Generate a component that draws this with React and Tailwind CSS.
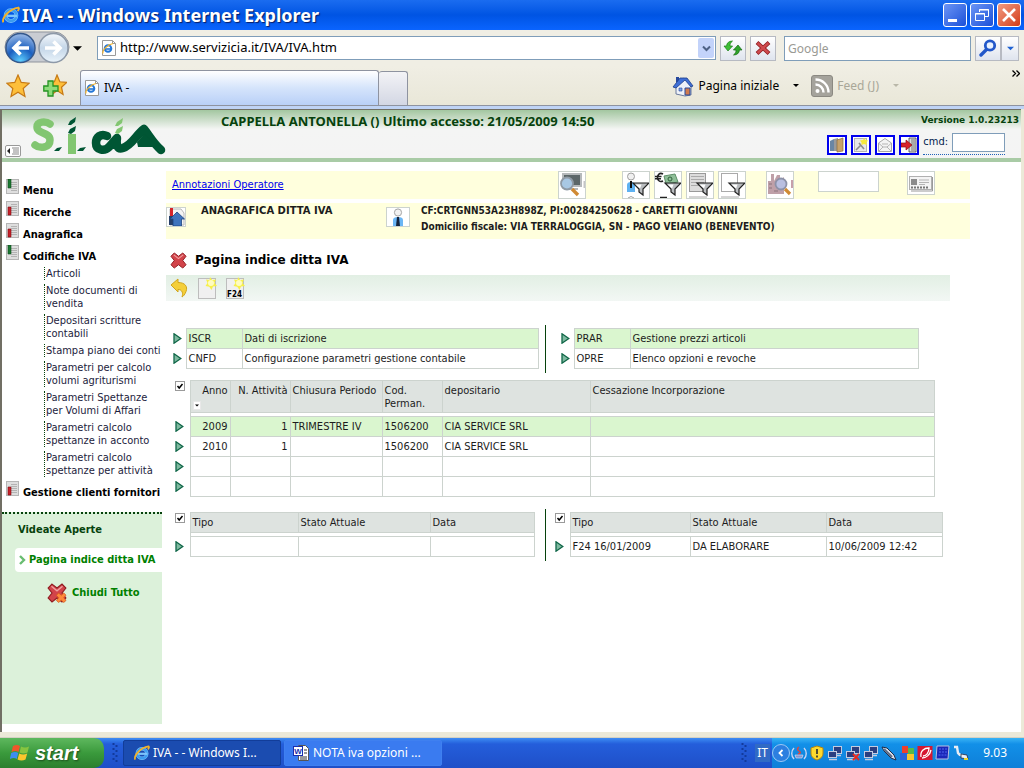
import React from "react";

const UI = "font-['DejaVu_Sans_Condensed','DejaVu_Sans',sans-serif]";

/* ---------- drawings ---------- */

function IeIcon({ size = 16 }) {
  return (
    <svg width={size} height={size} viewBox="0 0 16 16" fill="none" aria-hidden="true">
      <circle cx="8" cy="8.500" r="4.800" stroke="#7cc4fb" strokeWidth="3.400" />
      <circle cx="8" cy="8.500" r="4.800" stroke="#3c9cf0" strokeWidth="2.400" />
      <path d="M4 8.800h9.500" stroke="#7cc4fb" strokeWidth="2.200" />
      <path d="M1.200 14.600C-.4 11 6 2.600 14.600 1.400c1 1-.4 2.600-.8 3" stroke="#f3b229" strokeWidth="1.700" />
    </svg>
  );
}

function IePage({ size = 16 }) {
  return (
    <svg width={size} height={size} viewBox="0 0 16 16" fill="none" aria-hidden="true">
      <path d="M1.500.5h10l3 3v12h-13z" fill="#fff" stroke="#9a9a9a" />
      <path d="M11.500.5v3h3" stroke="#9a9a9a" />
      <circle cx="7" cy="8.500" r="3.300" stroke="#2477d8" strokeWidth="2" />
      <path d="M4 9h6.500" stroke="#2477d8" strokeWidth="1.600" />
      <path d="M2 13.500C1 11 6 4.500 12 3.500" stroke="#f3b229" strokeWidth="1.200" />
    </svg>
  );
}

function Star({ size = 24, plus = false }) {
  return (
    <svg width={size} height={size} viewBox="0 0 24 24" aria-hidden="true">
      <path
        d={plus ? "M14 1l2.800 6.800 7 .6-5.300 4.800 1.600 7.300L14 16.600l-5 3.900 1-7.300-4-4.800 5.400-.6z" : "M12 1l3.200 7.400 8 .8-6 5.300 1.800 8L12 18.300 5 22.500l1.800-8-6-5.300 8-.8z"}
        fill="#fdbf3a"
        stroke="#c77a15"
        strokeWidth="1.200"
      />
      {plus && <path d="M5 7h5v5h5v5h-5v5H5v-5H0.800v-5H5z" fill="#8fdc7a" stroke="#259322" strokeWidth="1.300" />}
    </svg>
  );
}

function NavOrbs() {
  return (
    <svg width="66" height="34" viewBox="0 0 66 34" fill="none" aria-hidden="true">
      <defs>
        <radialGradient id="orbBlue" cx=".5" cy=".95" r="1">
          <stop offset="0" stopColor="#5fd0ff" />
          <stop offset=".45" stopColor="#1a5fc0" />
          <stop offset="1" stopColor="#a9c4ea" />
        </radialGradient>
        <linearGradient id="orbPale" x1="0" y1="0" x2="0" y2="1">
          <stop offset="0" stopColor="#f4f8fc" />
          <stop offset=".5" stopColor="#c4d6e8" />
          <stop offset="1" stopColor="#eaf4fb" />
        </linearGradient>
      </defs>
      <rect x="1" y="1" width="64" height="30" rx="15" fill="#c9ccd2" stroke="#8f949d" />
      <circle cx="16.500" cy="17" r="14.500" fill="url(#orbBlue)" stroke="#35588c" strokeWidth="1.500" />
      <circle cx="49.500" cy="17" r="14.500" fill="url(#orbPale)" stroke="#8d99a8" strokeWidth="1.500" />
      <path d="M25 17H10M16.500 10.500L10 17l6.500 6.500" stroke="#fff" strokeWidth="3.600" />
      <path d="M41 17h15M49.500 10.500L56 17l-6.500 6.500" stroke="#fff" strokeWidth="3.600" />
    </svg>
  );
}

function RefreshIcon() {
  return (
    <svg width="20" height="20" viewBox="0 0 20 20" aria-hidden="true">
      <path d="M5 13L1 8h2.600C3.600 5 6 3 9.500 3 7.500 4.500 7 6 7 8h2.600z" fill="#3fbf37" stroke="#1c7d1a" strokeWidth=".7" />
      <path d="M15 7l4 5h-2.600c0 3-2.400 5-5.900 5 2-1.500 2.500-3 2.500-5h-2.600z" fill="#2fa52b" stroke="#176c16" strokeWidth=".7" />
    </svg>
  );
}

function StopIcon() {
  return (
    <svg width="16" height="16" viewBox="0 0 16 16" fill="none" aria-hidden="true">
      <path d="M2 2.500l12 11M14 2.500l-12 11" stroke="#8f1d22" strokeWidth="4" />
      <path d="M2.500 3l11 10M13.500 3l-11 10" stroke="#cf4a4e" strokeWidth="2.400" />
    </svg>
  );
}

function CrossIcon({ size = 18, color = "#d2444a", edge = "#8f1d22", small = false }) {
  return (
    <svg width={size} height={size} viewBox="0 0 18 18" aria-hidden="true">
      <path d="M4.500 1L9 4.500 13.500 1 17 4.500 13.500 9l3.500 4.500-3.500 3.500L9 13.500 4.500 17 1 13.500 4.500 9 1 4.500z" fill={color} stroke={edge} strokeWidth="1" />
      <path d="M4 3l5 4 5-4" stroke="#f0a0a0" strokeWidth="1.200" fill="none" />
      {small && <path d="M10.500 9l2.300 2 2.300-2 2 2-2 2.300 2 2.400-2 1.800-2.300-2-2.300 2-2-1.800 2-2.400-2-2.300z" fill="#ff8a3c" stroke="#d2591b" strokeWidth=".7" />}
    </svg>
  );
}

function SearchIcon() {
  return (
    <svg width="18" height="18" viewBox="0 0 18 18" fill="none" aria-hidden="true">
      <path d="M2 16l6-6" stroke="#2257c9" strokeWidth="3.400" strokeLinecap="round" />
      <circle cx="11" cy="6.500" r="4.700" fill="#e8f1ff" stroke="#2257c9" strokeWidth="2.800" />
    </svg>
  );
}

function HomeIcon() {
  return (
    <svg width="22" height="22" viewBox="0 0 22 22" aria-hidden="true">
      <path d="M4 2h3v5H4z" fill="#27489c" />
      <path d="M4 9l8-6 7 7v10l-6 1-9-2z" fill="#eef1f8" stroke="#6b7a9c" />
      <path d="M1 12L8 3h7l6 8-2 1-6-7-9 8z" fill="#3f6fd6" stroke="#1d3d88" strokeWidth=".8" />
      <path d="M13 13h5v7h-5z" fill="#d07a4d" stroke="#27489c" />
      <path d="M7 13h3v3H7z" fill="#7aa4ec" stroke="#27489c" strokeWidth=".6" />
    </svg>
  );
}

function FeedIcon() {
  return (
    <svg width="22" height="22" viewBox="0 0 22 22" fill="none" aria-hidden="true">
      <rect x=".5" y=".5" width="21" height="21" rx="2.500" fill="#a5a39c" stroke="#8b8982" />
      <circle cx="6.500" cy="16" r="2" fill="#fff" />
      <path d="M4.500 9.500c4.500 0 8 3.500 8 8M4.500 4.500c7.300 0 13 5.700 13 13" stroke="#fff" strokeWidth="2.400" />
    </svg>
  );
}

function Down({ w = 9, color = "#000", className = "" }) {
  return (
    <svg width={w} height="5" viewBox="0 0 10 5" className={className} aria-hidden="true">
      <path d="M0 0h10L5 5z" fill={color} />
    </svg>
  );
}

function Logo() {
  return (
    <svg width="144" height="48" viewBox="0 0 144 48" fill="none" role="img" aria-label="S.I.CIA" className="shrink-0">
      <path d="M22 12c-4-3-13-3-13 3 0 7 13 5 13 13 0 8-10 9-15 5" stroke="#82c671" strokeWidth="7.500" strokeLinecap="round" />
      <path d="M26 39l3-3 5-1-3 4z" fill="#005634" />
      <path d="M40 13l2-4 6-4-1 5-4 3zM40 21l2-4 6-3-1 5-4 3z" fill="#005634" />
      <path d="M44 26v12" stroke="#82c671" strokeWidth="8" strokeLinecap="square" />
      <path d="M49 39l3-3 6-1-3 4z" fill="#005634" />
      <path
        d="M79 24c-6-3-11 1-11 7 0 7 8 9 13 4 3-3 5-6 8-9-1 6 0 12 6 10 9-3 13-13 21-19 5 6 9 14 17 21"
        stroke="#005634"
        strokeWidth="8.500"
        strokeLinecap="round"
        strokeLinejoin="round"
      />
      <path d="M109 30l7-8 9 8 3 5h-18z" fill="#005634" />
      <path d="M87 14l2-4 6-4-1 5-4 3zM87 21l2-4 6-3-1 5-4 3z" fill="#82c671" />
    </svg>
  );
}

function Funnel() {
  return (
    <>
      <path d="M10 11h16l-6 6v6l-4-3v-3z" fill="#b9bcbf" stroke="#222" strokeWidth="1.200" />
      <path d="M12.500 12.500h6l-1.500 4z" fill="#fff" />
    </>
  );
}

function ToolDrawing({ kind }) {
  return (
    <svg width="26" height="26" viewBox="0 0 26 26" fill="none" aria-hidden="true">
      {kind === "monitor" && (
        <>
          <rect x="4" y="2" width="18" height="12" fill="#5b6668" stroke="#b5b9bb" strokeWidth="2" />
          <path d="M10 17h9" stroke="#b5b9bb" strokeWidth="2" />
          <path d="M25.500 9v7" stroke="#c5c5c5" strokeWidth="2" />
          <circle cx="8" cy="11.500" r="6" fill="#a8c8e4" stroke="#8f9aa5" strokeWidth="1.800" />
          <path d="M13 17l6 6" stroke="#d08a33" strokeWidth="3.400" />
        </>
      )}
      {kind === "person" && (
        <>
          <circle cx="8" cy="4.500" r="3.500" fill="#f0f0f0" stroke="#a0a0a0" />
          <path d="M4 20v-7q0-3 4-3t4 3v7z" fill="#5fb2f2" />
          <path d="M8 9v7" stroke="#111" strokeWidth="2" />
          <path d="M5 26q3-3 6 0" stroke="#a0a0a0" />
          <Funnel />
        </>
      )}
      {kind === "money" && (
        <>
          <path d="M9 4l11-2 3 8-12 2z" fill="#8fbf98" stroke="#5e8f68" />
          <circle cx="15" cy="7" r="2" stroke="#2f5f3a" />
          <path d="M8 2C4.500 0 2.500 3 2.500 5.500S4.500 10.500 8 9M0 4.500h6.500M0 6.800h6" stroke="#222" strokeWidth="1.600" />
          <path d="M5 25.500h7" stroke="#222" strokeWidth="1.500" />
          <Funnel />
        </>
      )}
      {kind === "list" && (
        <>
          <rect x="2.500" y="1.500" width="16" height="18" fill="#dcdcdc" stroke="#9a9a9a" />
          <path d="M4 4.500h13M4 7.500h13M4 10.500h13M4 13.500h8M2 25h18" stroke="#aaa" />
          <Funnel />
        </>
      )}
      {kind === "blank" && (
        <>
          <rect x="2.500" y="1.500" width="16" height="18" fill="#fff" stroke="#aaa" />
          <path d="M2 25h18" stroke="#aaa" />
          <Funnel />
        </>
      )}
      {kind === "factory" && (
        <>
          <path d="M1 22V9h3V2h3v7l3-6h3v5l4-3v17z" fill="#bfa0a8" />
          <path d="M2 12h3M2 16h3M7 19h4" stroke="#a58a92" strokeWidth="2" />
          <circle cx="14" cy="12" r="5.500" fill="#b9bfe0" stroke="#8d92a8" strokeWidth="1.800" />
          <path d="M18 17l5 5" stroke="#d08a33" strokeWidth="3.200" />
          <path d="M25 8v8" stroke="#c7a0aa" strokeWidth="2" />
        </>
      )}
    </svg>
  );
}

function IdCard() {
  return (
    <svg width="26" height="22" viewBox="0 0 26 22" fill="none" aria-hidden="true">
      <rect x="1.500" y="4.500" width="22" height="13" fill="#f4f4f4" stroke="#b0b0b0" />
      <path d="M24.500 5v14H3" stroke="#999" />
      <rect x="3" y="7" width="6" height="6" fill="#8c8c8c" />
      <path d="M11 8h10M11 10.500h10M11 12.500h6" stroke="#b5b5b5" />
      <path d="M3 15.500h18" stroke="#777" strokeWidth="2" strokeDasharray="2 1" />
    </svg>
  );
}

function PersonIcon() {
  return (
    <svg width="22" height="18" viewBox="0 0 22 18" aria-hidden="true">
      <circle cx="11" cy="4.500" r="3.600" fill="#f2f2f2" stroke="#a5a5a5" />
      <path d="M6 18v-6q0-3 5-3t5 3v6z" fill="#6bb6f5" />
      <path d="M10 9h2l1 9H9z" fill="#16243c" />
    </svg>
  );
}

function HomePageIcon() {
  return (
    <svg width="18" height="18" viewBox="0 0 18 18" aria-hidden="true">
      <path d="M3 1h11l3 4v12H3z" fill="#f3f3f3" stroke="#b8b8b8" />
      <path d="M3 0h3v8H3z" fill="#d5252b" />
      <path d="M2 8h4v9H2z" fill="#27406b" />
      <path d="M10 4l7.500 7h-3v7H6v-7H3z" fill="#3f74bd" stroke="#1d4480" strokeWidth=".8" />
    </svg>
  );
}

function MenuIcon({ tone }) {
  return (
    <svg width="13" height="15" viewBox="0 0 13 15" aria-hidden="true" className="shrink-0">
      <rect x=".5" y=".5" width="12" height="14" fill="#dedede" stroke="#b5b5b5" />
      <path d="M5 3.500h6M5 5.500h6M5 7.500h6M5 9.500h6M5 11.500h6" stroke="#b3b3b3" />
      {tone === "green" ? (
        <path d="M2 0h3v9H2z" fill="#1c7a33" stroke="#0d4a1c" strokeWidth=".6" />
      ) : (
        <path d="M2 6h3v8H2z" fill="#c9222a" stroke="#7d0c12" strokeWidth=".6" />
      )}
    </svg>
  );
}

function PageStar({ label }) {
  return (
    <svg width="20" height="22" viewBox="0 0 20 22" aria-hidden="true">
      <rect x=".5" y="1.500" width="17" height="20" fill="#f0f0f0" stroke="#bdbdbd" />
      <path d="M12 0l2.200 3 3.800-.5-1.500 3.500 2.500 3-4 .5-1.500 3.500-2.200-3.200L7.500 9l2-3L8 2.500l3.500.5z" fill="#f7f04a" />
      <circle cx="13" cy="6" r="3" fill="#fffcc0" />
      {label && (
        <text x="1" y="20" fontSize="8" fontWeight="700" fontFamily="DejaVu Sans Condensed, sans-serif" fill="#000">
          {label}
        </text>
      )}
    </svg>
  );
}

function UndoIcon() {
  return (
    <svg width="20" height="20" viewBox="0 0 20 20" aria-hidden="true">
      <path d="M1 7l7-6v3.500c7 0 10 4 8 9-1 3-3 5-4 5.500 1-3 1-7.500-4-7.500V14z" fill="#f4cf3a" stroke="#d1a51c" />
    </svg>
  );
}

function HeaderDrawing({ kind }) {
  return (
    <svg width="16" height="16" viewBox="0 0 16 16" fill="none" aria-hidden="true">
      {kind === "books" && (
        <>
          <path d="M1 4l4-2v12H1z" fill="#6a86a4" />
          <path d="M5 2l4-1v13H5z" fill="#9a9a9a" />
          <path d="M8 3l6-2v13l-6 1z" fill="#c8a269" stroke="#8a6a3a" strokeWidth=".7" />
        </>
      )}
      {kind === "new" && (
        <>
          <rect x="1.500" y="1.500" width="12" height="13" fill="#e8e8e8" stroke="#b5b5b5" />
          <path d="M3 13l5-5m-2-2l5 6" stroke="#8e8e8e" strokeWidth="1.600" />
          <path d="M11 1l1.500 2 2.500.5-1.500 2 .5 2.500-3-1-2.500 1V5.500L7 3.500 10 3z" fill="#f7ea3c" />
        </>
      )}
      {kind === "mail" && (
        <>
          <path d="M1.500 6L8 1.500 14.500 6v8.500h-13z" fill="#f4f4f4" stroke="#a8a8a8" />
          <path d="M2 14l4-4h4l4 4M2 6.500L6 10M14 6.500L10 10M5 7h6" stroke="#b5b5b5" />
        </>
      )}
      {kind === "exit" && (
        <>
          <path d="M8 1h7v14H8z" fill="#ddd" stroke="#444" strokeWidth=".8" />
          <path d="M11 2v12M13 2v12" stroke="#777" />
          <path d="M0 6h5V3l6 5-6 5v-3H0z" fill="#d8222b" stroke="#8c0d14" strokeWidth=".7" />
        </>
      )}
    </svg>
  );
}

function WindowsFlag() {
  return (
    <svg width="20" height="18" viewBox="0 0 20 18" aria-hidden="true">
      <path d="M3 2q4-2 7 0L8.500 8q-3-2-7 0z" fill="#f0562a" />
      <path d="M11 2.500q4 2 8 0L17.500 8.500q-4 2-8 0z" fill="#86c440" />
      <path d="M1.200 9q4-2 7 0L6.800 15q-3-2-7 0z" fill="#3f8df0" />
      <path d="M9.200 9.500q4 2 8 0L15.500 15.500q-4 2-8 0z" fill="#fbc62d" />
    </svg>
  );
}

function TrayDrawing({ kind }) {
  return (
    <svg width="16" height="16" viewBox="0 0 16 16" fill="none" aria-hidden="true">
      {kind === "java" && (
        <>
          <path d="M3 3C0 6 0 11 3 14M13 3c3 3 3 8 0 11" stroke="#c9d4f2" strokeWidth="1.400" />
          <path d="M8 2q-3 2 0 4t-1 3" stroke="#e5433a" strokeWidth="1.500" />
          <path d="M4 10h8l-1 3H5z" fill="#8797cf" stroke="#dbe2f7" strokeWidth=".6" />
        </>
      )}
      {kind === "shield" && (
        <>
          <path d="M8 1l6 2v5c0 4-3 6-6 7-3-1-6-3-6-7V3z" fill="#ffd92e" stroke="#b8860b" />
          <path d="M8 4v5M8 10.500v2" stroke="#333" strokeWidth="1.700" />
        </>
      )}
      {(kind === "net" || kind === "netoff") && (
        <>
          <rect x="6.500" y="1.500" width="8" height="7" fill="#2b3f80" stroke="#c3cbe0" />
          <rect x="1.500" y="6.500" width="8" height="6" fill="#2b3f80" stroke="#c3cbe0" />
          <path d="M2 14.500h8M9 10.500h5" stroke="#c3cbe0" strokeWidth="1.600" />
          {kind === "netoff" && <path d="M8 9l6 6M14 9l-6 6" stroke="#e62a1f" strokeWidth="2" />}
        </>
      )}
      {kind === "plug" && (
        <>
          <path d="M1 2l5 1 7 7 2 5-5-2-7-7z" fill="#dfe5ee" stroke="#1c2b48" />
          <path d="M3 4l8 8" stroke="#5d6c86" strokeWidth="2.200" />
        </>
      )}
      {kind === "blocks" && (
        <>
          <path d="M3 1h6v7H3z" fill="#ee3f2c" />
          <path d="M9 3h6v6H9z" fill="#56b947" />
          <path d="M1 8h7v7H1z" fill="#2b62d9" />
          <path d="M8 9h7v6H8z" fill="#f8c52d" />
        </>
      )}
      {kind === "red" && (
        <>
          <rect x=".5" y="1" width="15" height="14" fill="#d61832" />
          <path d="M4 12C3 6 7 3 12 3c0 5-3 8-6 8M5 13c4 0 8-3 9-8" stroke="#fff" strokeWidth="1.300" />
        </>
      )}
      {kind === "screen" && (
        <>
          <path d="M2 1h12l-1 13H1z" fill="#1a27b8" stroke="#b9bfdf" />
          <path d="M4 4h8M4 7h8M3.500 10h8" stroke="#4e67f0" strokeDasharray="2 1" />
        </>
      )}
      {kind === "usb" && (
        <>
          <path d="M1 2h3l1 6q2 3 5 2" stroke="#e9edf5" strokeWidth="2.400" />
          <path d="M8 9l6 1 1 4-7-1z" fill="#eceff6" stroke="#1c2b48" strokeWidth=".8" />
          <path d="M11 14h4" stroke="#e8d02a" strokeWidth="2" />
        </>
      )}
    </svg>
  );
}

/* ---------- shared controls ---------- */

function RowArrow({ label }) {
  return (
    <button type="button" aria-label={label} className="block">
      <svg width="9" height="11" viewBox="0 0 9 11" aria-hidden="true">
        <path d="M1 .8L7.800 5.500 1 10.200z" fill="#7fb9a0" stroke="#0f6647" strokeWidth="1.300" />
      </svg>
    </button>
  );
}

function Tick({ label }) {
  return (
    <span className="relative block size-[10px]">
      <input
        type="checkbox"
        defaultChecked
        aria-label={label}
        className="block size-[10px] appearance-none border border-[#9a9a9a] bg-white"
      />
      <svg viewBox="0 0 10 10" className="pointer-events-none absolute inset-0 size-[10px]" aria-hidden="true">
        <path d="M2.500 5l1.700 2L7.500 3" fill="none" stroke="#000" strokeWidth="1.500" />
      </svg>
    </span>
  );
}

const CELL = "h-5 border border-[#ccd3ce] px-[2px] truncate leading-[14px]";

function Grid({ lead, columns, rows, tick, tall = false, activeRow = -1, label, className = "" }) {
  return (
    <table aria-label={label} className={`w-full table-fixed border-collapse text-left ${className}`}>
      <colgroup>
        <col className={lead} />
        {columns.map((c, i) => (
          <col key={i} className={c.width} />
        ))}
      </colgroup>
      {tick && (
        <thead>
          <tr>
            <td className="p-0 align-top">
              <Tick label={tick} />
            </td>
            {columns.map((c, i) => (
              <th
                key={i}
                scope="col"
                className={`border border-[#ccd3ce] bg-[#dee3e0] font-normal leading-[13px] px-[2px] ${
                  tall ? "h-8 pt-[3px] align-top" : "h-5"
                } ${c.right ? "text-right whitespace-nowrap" : ""}`}
              >
                {c.name}
                {c.sort && (
                  <button type="button" aria-label="Ordina" className="mt-1 flex h-[9px] w-2 items-center justify-center border border-[#e8e8e8] bg-white">
                    <Down w={4} />
                  </button>
                )}
              </th>
            ))}
          </tr>
          <tr aria-hidden="true">
            <td className="h-1 p-0" />
            <td colSpan={columns.length} className="h-1 border border-[#ccd3ce] p-0" />
          </tr>
        </thead>
      )}
      <tbody>
        {rows.map((row, r) => (
          <tr key={r}>
            <td className="p-0">
              <RowArrow label={`Apri riga ${r + 1}`} />
            </td>
            {columns.map((c, i) => (
              <td key={i} className={`${CELL} ${c.right ? "text-right" : ""} ${r === activeRow ? "bg-[#daf6cf]" : "bg-white"}`}>
                {row[i]}
              </td>
            ))}
          </tr>
        ))}
      </tbody>
    </table>
  );
}

function ToolButton({ kind, label }) {
  return (
    <button type="button" aria-label={label} className="flex size-7 items-center justify-center overflow-hidden border border-[#ccd3ce] bg-white">
      <ToolDrawing kind={kind} />
    </button>
  );
}

/* ---------- browser window ---------- */

function TitleBar() {
  return (
    <header className="flex h-[30px] items-center bg-linear-to-b from-[#1a6cf0] via-[#0054e3] to-[#0a64ff] pl-[2px] pr-[3px]">
      <IeIcon size={18} />
      <h1 className="ml-[2px] flex-1 font-['Noto_Sans',sans-serif] text-[18px] font-bold text-white [text-shadow:1px_1px_1px_#0a1f66]">
        IVA - - Windows Internet Explorer
      </h1>
      <div className="flex gap-[3px]">
        <button type="button" aria-label="Riduci a icona" className="flex size-6 items-end rounded-[3px] border border-white bg-linear-to-br from-[#6c94f5] to-[#1a4fd8] pb-1 pl-1">
          <span className="block h-[3px] w-[9px] bg-white" />
        </button>
        <button type="button" aria-label="Ripristina" className="flex size-6 items-center justify-center rounded-[3px] border border-white bg-linear-to-br from-[#6c94f5] to-[#1a4fd8]">
          <svg width="14" height="14" viewBox="0 0 14 14" fill="none" stroke="#fff" aria-hidden="true">
            <path d="M4.500 4V1.500h9v7H10M4 2h10M.5 5.500h9v7h-9zM0 6h10" />
          </svg>
        </button>
        <button type="button" aria-label="Chiudi" className="flex size-6 items-center justify-center rounded-[3px] border border-white bg-linear-to-br from-[#f09a80] to-[#d3380f]">
          <svg width="14" height="14" viewBox="0 0 14 14" aria-hidden="true">
            <path d="M1 1l12 12M13 1L1 13" stroke="#fff" strokeWidth="2.600" />
          </svg>
        </button>
      </div>
    </header>
  );
}

const CHROME_BTN = "flex items-center justify-center border border-[#b7bac2] bg-linear-to-b from-white to-[#dfe4ee]";

function AddressRow() {
  return (
    <div className="flex h-9 items-center bg-[#f0eee4] pl-1 pr-[5px] font-['Noto_Sans',sans-serif] text-[12px]">
      <button type="button" aria-label="Indietro e avanti">
        <NavOrbs />
      </button>
      <button type="button" aria-label="Cronologia" className="ml-[3px]">
        <Down />
      </button>
      <div className="ml-[15px] flex h-6 min-w-0 flex-1 items-center border border-[#7f9db9] bg-white pl-[3px]">
        <IePage />
        <input aria-label="Indirizzo" defaultValue="http://www.servizicia.it/IVA/IVA.htm" className="ml-[3px] min-w-0 flex-1 bg-transparent text-[13px] outline-none" />
        <button type="button" aria-label="Apri elenco indirizzi" className="mr-px flex h-5 w-4 items-center justify-center rounded-[2px] bg-[#c3d3fa]">
          <svg width="9" height="7" viewBox="0 0 9 7" fill="none" aria-hidden="true">
            <path d="M1 1.500l3.500 3.500L8 1.500" stroke="#4d6185" strokeWidth="2" />
          </svg>
        </button>
      </div>
      <button type="button" aria-label="Aggiorna" className={`ml-[4px] h-[25px] w-[26px] ${CHROME_BTN}`}>
        <RefreshIcon />
      </button>
      <button type="button" aria-label="Interrompi" className={`ml-1 h-[25px] w-[26px] ${CHROME_BTN}`}>
        <StopIcon />
      </button>
      <input aria-label="Cerca" placeholder="Google" className="ml-2 h-[25px] w-[187px] border border-[#7f9db9] bg-white px-[3px] placeholder:text-[#9a9a94] outline-none" />
      <button type="button" aria-label="Avvia ricerca" className={`ml-1 h-[25px] w-[26px] ${CHROME_BTN}`}>
        <SearchIcon />
      </button>
      <button type="button" aria-label="Opzioni di ricerca" className={`h-[25px] w-[18px] ${CHROME_BTN}`}>
        <Down w={7} color="#1f62d2" />
      </button>
    </div>
  );
}

function TabRow() {
  return (
    <div className="flex h-10 border-b border-[#8e93a0] bg-linear-to-b from-[#f0eee4] to-[#e9e7d8] font-['Noto_Sans',sans-serif] text-[12px]">
      <div className="flex w-20 items-center gap-[13px] pl-[6px]">
        <button type="button" aria-label="Preferiti">
          <Star />
        </button>
        <button type="button" aria-label="Aggiungi a preferiti">
          <Star plus />
        </button>
      </div>
      <div className="mt-1 flex w-[299px] items-center gap-1 rounded-t-[3px] border border-b-0 border-[#8e93a0] bg-linear-to-b from-white via-[#d5e4fb] to-[#b9d0f7] pl-[3px]">
        <IePage />
        <span>IVA -</span>
      </div>
      <button type="button" aria-label="Nuova scheda" className="mt-[5px] w-[29px] rounded-t-[3px] border border-b-0 border-l-0 border-[#8e93a0] bg-linear-to-b from-[#f3f3f6] to-[#d3d7e4]" />
      <div className="ml-auto flex items-center pr-[4px]">
        <button type="button" className="flex items-center gap-1">
          <HomeIcon />
          <span>Pagina iniziale</span>
          <Down w={6} className="ml-[10px]" />
        </button>
        <button type="button" className="ml-3 flex items-center gap-1 text-[#a9a798]">
          <FeedIcon />
          <span>Feed (J)</span>
          <Down w={6} color="#b9b7a8" className="ml-[10px]" />
        </button>
        <button type="button" aria-label="Altri comandi" className="mb-6 ml-[113px] w-2">
          <svg width="8" height="7" viewBox="0 0 8 7" fill="none" aria-hidden="true">
            <path d="M.5.500l3 3-3 3M4.500.500l3 3-3 3" stroke="#000" strokeWidth="1.300" />
          </svg>
        </button>
      </div>
    </div>
  );
}

/* ---------- web application ---------- */

function AppHeader() {
  const actions = [
    ["books", "Archivio"],
    ["new", "Nuovo"],
    ["mail", "Posta"],
    ["exit", "Esci"],
  ];
  return (
    <header className="flex h-[52px] border-b-4 border-[#a9cba6] bg-linear-to-b from-[#a3c6a0] via-[#f4f5f4] via-40% to-[#f4f4f4]">
      <button type="button" aria-label="Nascondi menu" className="mb-px ml-[3px] flex h-3 w-4 items-center justify-center self-end rounded-[2px] border border-[#999] bg-white">
        <svg width="12" height="8" viewBox="0 0 12 8" aria-hidden="true">
          <path d="M0 4l3-3v6z" fill="#222" />
          <path d="M5 1h7M6 3h6M6 5h6M5 7h7" stroke="#888" />
        </svg>
      </button>
      <div className="ml-[7px] mt-[2px]">
        <Logo />
      </div>
      <p className="ml-[49px] mt-[3px] flex-1 font-['Noto_Sans',sans-serif] text-[13px] font-bold leading-4 text-[#06420c]">
        CAPPELLA ANTONELLA () Ultimo accesso: 21/05/2009 14:50
      </p>
      <div className="flex flex-col items-end pr-[2px]">
        <p className="mt-1 font-['DejaVu_Sans',sans-serif] text-[9px] font-bold leading-3 text-[#06420c]">Versione 1.0.23213</p>
        <div className="mt-[5px] flex items-center pr-[14px]">
          <div className="mt-1 flex gap-1">
            {actions.map(([kind, label]) => (
              <button key={kind} type="button" aria-label={label} className="flex size-5 items-center justify-center border-2 border-[#0000ee] bg-white">
                <HeaderDrawing kind={kind} />
              </button>
            ))}
          </div>
          <label className="ml-1 mt-px flex items-center gap-1 border-b border-dotted border-[#1f62b8] pb-[2px] text-[11px] text-[#001a4d]">
            cmd:
            <input className="h-[19px] w-[53px] border border-[#7f9db9] bg-white px-[2px] outline-none" />
          </label>
        </div>
      </div>
    </header>
  );
}

const SUBMENU = [
  "Articoli",
  "Note documenti di vendita",
  "Depositari scritture contabili",
  "Stampa piano dei conti",
  "Parametri per calcolo volumi agriturismi",
  "Parametri Spettanze per Volumi di Affari",
  "Parametri calcolo spettanze in acconto",
  "Parametri calcolo spettanze per attività",
];

function MenuEntry({ tone, children }) {
  return (
    <a href="#" className="flex h-[22px] items-start gap-1 whitespace-nowrap pl-1 text-[11px] font-bold text-black">
      <MenuIcon tone={tone} />
      <span className="mt-[5px] leading-[14px]">{children}</span>
    </a>
  );
}

function Sidebar() {
  return (
    <aside className="flex w-[160px] shrink-0 flex-col bg-white pb-2 pt-[17px]">
      <nav aria-label="Menu principale">
        <MenuEntry tone="green">Menu</MenuEntry>
        <MenuEntry tone="red">Ricerche</MenuEntry>
        <MenuEntry tone="red">Anagrafica</MenuEntry>
        <MenuEntry tone="green">Codifiche IVA</MenuEntry>
        <ul className="flex flex-col gap-1 pb-1 pl-[42px] text-[11px] leading-[13px] text-[#1c1c3c]">
          {SUBMENU.map((item) => (
            <li key={item} className="border-l border-dotted border-[#06420c] pl-px">
              <a href="#" className="block w-[116px]">
                {item}
              </a>
            </li>
          ))}
        </ul>
        <MenuEntry tone="red">Gestione clienti fornitori</MenuEntry>
      </nav>
      <section className="mt-[9px] flex-1 border-t-2 border-dotted border-[#06420c] bg-[#dcf1da] text-[11px] font-bold text-[#008000]">
        <h2 className="pl-4 pt-2 leading-4 text-[#06420c]">Videate Aperte</h2>
        <a href="#" className="ml-[13px] mt-[10px] flex h-6 items-center gap-[3px] whitespace-nowrap rounded-l-[4px] bg-white pl-1">
          <svg width="7" height="10" viewBox="0 0 7 10" fill="none" aria-hidden="true">
            <path d="M1 1l4 4-4 4" stroke="#69bd72" strokeWidth="2.400" />
          </svg>
          Pagina indice ditta IVA
        </a>
        <button type="button" className="ml-[45px] mt-[11px] flex items-center gap-[5px]">
          <CrossIcon size={20} small />
          Chiudi Tutto
        </button>
      </section>
    </aside>
  );
}

function ContextBars() {
  return (
    <div className="mr-[51px] flex flex-col gap-1">
      <div className="flex h-7 bg-[#ffffdd]">
        <a href="#" className="ml-[6px] mt-[7px] w-[386px] text-[11px] leading-[14px] text-[#0000ee] underline">
          Annotazioni Operatore
        </a>
        <ToolButton kind="monitor" label="Ricerca" />
        <div className="ml-9 flex gap-1">
          <ToolButton kind="person" label="Filtro soggetto" />
          <ToolButton kind="money" label="Filtro importi" />
          <ToolButton kind="list" label="Filtro elenco" />
          <ToolButton kind="blank" label="Filtro vuoto" />
        </div>
        <div className="ml-5">
          <ToolButton kind="factory" label="Ricerca ditta" />
        </div>
        <input aria-label="Codice" className="ml-6 h-[21px] w-[61px] border border-[#ccd3ce] bg-white px-1 text-[11px] outline-none" />
        <button type="button" aria-label="Scheda" className="ml-7 flex h-6 w-7 items-center justify-center border border-[#ccd3ce] bg-white">
          <IdCard />
        </button>
      </div>
      <div className="flex h-9 bg-[#ffffdd] text-[10px] font-bold leading-4 text-[#1c1c1c]">
        <button type="button" aria-label="Pagina principale" className="mt-1 flex size-5 items-center justify-center border border-[#ccd3ce] bg-white">
          <HomePageIcon />
        </button>
        <h2 className="ml-[15px] w-[185px] font-['DejaVu_Sans',sans-serif]">ANAGRAFICA DITTA IVA</h2>
        <button type="button" aria-label="Soggetto" className="mt-1 flex h-5 w-6 items-center justify-center border border-[#ccd3ce] bg-white">
          <PersonIcon />
        </button>
        <p className="ml-[11px] whitespace-nowrap">
          CF:CRTGNN53A23H898Z, PI:00284250628 - CARETTI GIOVANNI
          <br />
          Domicilio fiscale: VIA TERRALOGGIA, SN - PAGO VEIANO (BENEVENTO)
        </p>
      </div>
    </div>
  );
}

const YEARS = [
  ["2009", "1", "TRIMESTRE IV", "1506200", "CIA SERVICE SRL", ""],
  ["2010", "1", "", "1506200", "CIA SERVICE SRL", ""],
  ["", "", "", "", "", ""],
  ["", "", "", "", "", ""],
];

function MainPanel() {
  return (
    <main className="min-w-0 flex-1 bg-white pl-1 pt-[9px] text-[11px] text-[#1c1c1c]">
      <ContextBars />
      <div className="ml-1 mt-[11px] flex h-5 items-center gap-2 font-['DejaVu_Sans',sans-serif] text-[12px] font-bold text-black">
        <button type="button" aria-label="Chiudi pagina">
          <CrossIcon size={17} />
        </button>
        <h2>Pagina indice ditta IVA</h2>
      </div>
      <div className="mr-[71px] mt-[5px] flex h-[26px] items-center gap-2 bg-linear-to-b from-[#e2efe4] to-[#f2f7f4] pl-1">
        <button type="button" aria-label="Indietro">
          <UndoIcon />
        </button>
        <button type="button" aria-label="Nuovo documento">
          <PageStar />
        </button>
        <button type="button" aria-label="Nuovo F24">
          <PageStar label="F24" />
        </button>
      </div>

      <div className="mt-6 flex">
        <div className="w-[380px] border-r border-[#06420c] pb-1 pl-[7px] pr-[6px] pt-[3px]">
          <Grid
            label="Dati ditta"
            lead="w-[13px]"
            activeRow={0}
            columns={[{ width: "w-14" }, { width: "w-auto" }]}
            rows={[
              ["ISCR", "Dati di iscrizione"],
              ["CNFD", "Configurazione parametri gestione contabile"],
            ]}
          />
        </div>
        <div className="mr-[102px] flex-1 pl-[15px] pt-[3px]">
          <Grid
            label="Gestione"
            lead="w-[13px]"
            activeRow={0}
            columns={[{ width: "w-14" }, { width: "w-auto" }]}
            rows={[
              ["PRAR", "Gestione prezzi articoli"],
              ["OPRE", "Elenco opzioni e revoche"],
            ]}
          />
        </div>
      </div>

      <div className="ml-[9px] mr-[86px] mt-[7px]">
        <Grid
          label="Annualità"
          lead="w-[15px]"
          tick="Seleziona annualità"
          tall
          activeRow={0}
          columns={[
            { name: "Anno", width: "w-10", right: true, sort: true },
            { name: "N. Attività", width: "w-[60px]", right: true },
            { name: "Chiusura Periodo", width: "w-[92px]" },
            { name: "Cod. Perman.", width: "w-[60px]" },
            { name: "depositario", width: "w-[148px]" },
            { name: "Cessazione Incorporazione", width: "w-auto" },
          ]}
          rows={YEARS}
        />
      </div>

      <div className="mt-[12px] flex">
        <div className="w-[380px] border-r border-[#06420c] pb-1 pl-[9px] pr-[10px] pt-[3px]">
          <Grid
            label="Stato documenti"
            lead="w-[15px]"
            tick="Seleziona documenti"
            columns={[
              { name: "Tipo", width: "w-[108px]" },
              { name: "Stato Attuale", width: "w-[132px]" },
              { name: "Data", width: "w-auto" },
            ]}
            rows={[["", "", ""]]}
          />
        </div>
        <div className="mr-[78px] flex-1 pl-[9px] pt-[3px]">
          <Grid
            label="Stato F24"
            lead="w-[15px]"
            tick="Seleziona F24"
            columns={[
              { name: "Tipo", width: "w-[120px]" },
              { name: "Stato Attuale", width: "w-[136px]" },
              { name: "Data", width: "w-auto" },
            ]}
            rows={[["F24 16/01/2009", "DA ELABORARE", "10/06/2009 12:42"]]}
          />
        </div>
      </div>
    </main>
  );
}

/* ---------- taskbar ---------- */

function Grip() {
  return (
    <svg width="6" height="20" viewBox="0 0 6 20" aria-hidden="true">
      <path d="M1.500 0v20M4.500 2v18" stroke="#123a9c" strokeWidth="2" strokeDasharray="2 3" />
    </svg>
  );
}

function Taskbar() {
  const tray = ["java", "shield", "net", "netoff", "net", "plug", "blocks", "red", "screen", "usb"];
  return (
    <footer className="flex h-[30px] items-stretch bg-linear-to-b from-[#3f8cf3] via-[#245edb] via-20% to-[#1f4fc8] font-['Noto_Sans',sans-serif] text-[12px] text-white">
      <button type="button" className="flex w-[104px] items-center gap-[5px] rounded-r-[10px] bg-linear-to-b from-[#5eb85e] via-[#3a9a3c] to-[#2c7f2e] pl-[10px] font-['Liberation_Sans',sans-serif] text-[20px] font-bold italic [text-shadow:1px_1px_2px_#1b4d1c]">
        <WindowsFlag />
        start
      </button>
      <div className="ml-2 flex items-center">
        <Grip />
      </div>
      <button type="button" className="my-[2px] ml-[5px] flex w-[158px] items-center gap-[3px] rounded-[2px] border border-[#123d99] bg-[#1b4cb0] pl-[10px]">
        <IeIcon />
        IVA - - Windows I...
      </button>
      <button type="button" className="my-[2px] ml-[3px] flex w-[158px] items-center gap-1 rounded-[2px] border border-[#3f80f0] bg-[#3a7bf0] pl-2">
        <svg width="16" height="16" viewBox="0 0 16 16" aria-hidden="true">
          <path d="M5.500.500h7l3 3v12h-10z" fill="#fff" stroke="#555" />
          <path d="M7 12h7M7 14h7M11 5h3M11 8h3" stroke="#333" />
          <rect x=".5" y="1.500" width="9" height="9" fill="#fff" stroke="#1a2fae" />
          <text x="1.200" y="9" fontSize="8" fontWeight="700" fontFamily="Liberation Sans, sans-serif" fill="#1a2fae">W</text>
        </svg>
        NOTA iva opzioni ...
      </button>
      <div className="ml-auto flex items-center gap-2">
        <Grip />
        <span className="bg-[#316ac5] px-[2px]">IT</span>
      </div>
      <div className="ml-[2px] flex w-[252px] items-center bg-linear-to-b from-[#37b3f5] via-[#1290e8] via-20% to-[#0f7fd8]">
        <button type="button" aria-label="Mostra icone nascoste" className="flex size-[18px] items-center justify-center rounded-full border border-[#9cc8f5] bg-[#2c7fe0]">
          <svg width="8" height="8" viewBox="0 0 8 8" fill="none" aria-hidden="true">
            <path d="M5.500 1L2.500 4l3 3" stroke="#fff" strokeWidth="1.800" />
          </svg>
        </button>
        <div className="ml-px flex gap-[2px]">
          {tray.map((kind, i) => (
            <TrayDrawing key={i} kind={kind} />
          ))}
        </div>
        <time className="ml-auto mr-[17px]">9.03</time>
      </div>
    </footer>
  );
}

export default function App() {
  return (
    <div className="flex min-h-screen flex-col bg-[#ece9d8]">
      <TitleBar />
      <AddressRow />
      <TabRow />
      <div className="h-[3px] bg-[#bfd3f5]" />
      <div className={`mr-[3px] flex flex-1 flex-col border-l-2 border-t border-[#716f64] bg-white ${UI}`}>
        <AppHeader />
        <div className="flex flex-1">
          <Sidebar />
          <MainPanel />
        </div>
      </div>
      <div className="h-[6px] border-b border-[#d5d2c4] bg-[#ece9d8]" />
      <Taskbar />
    </div>
  );
}
